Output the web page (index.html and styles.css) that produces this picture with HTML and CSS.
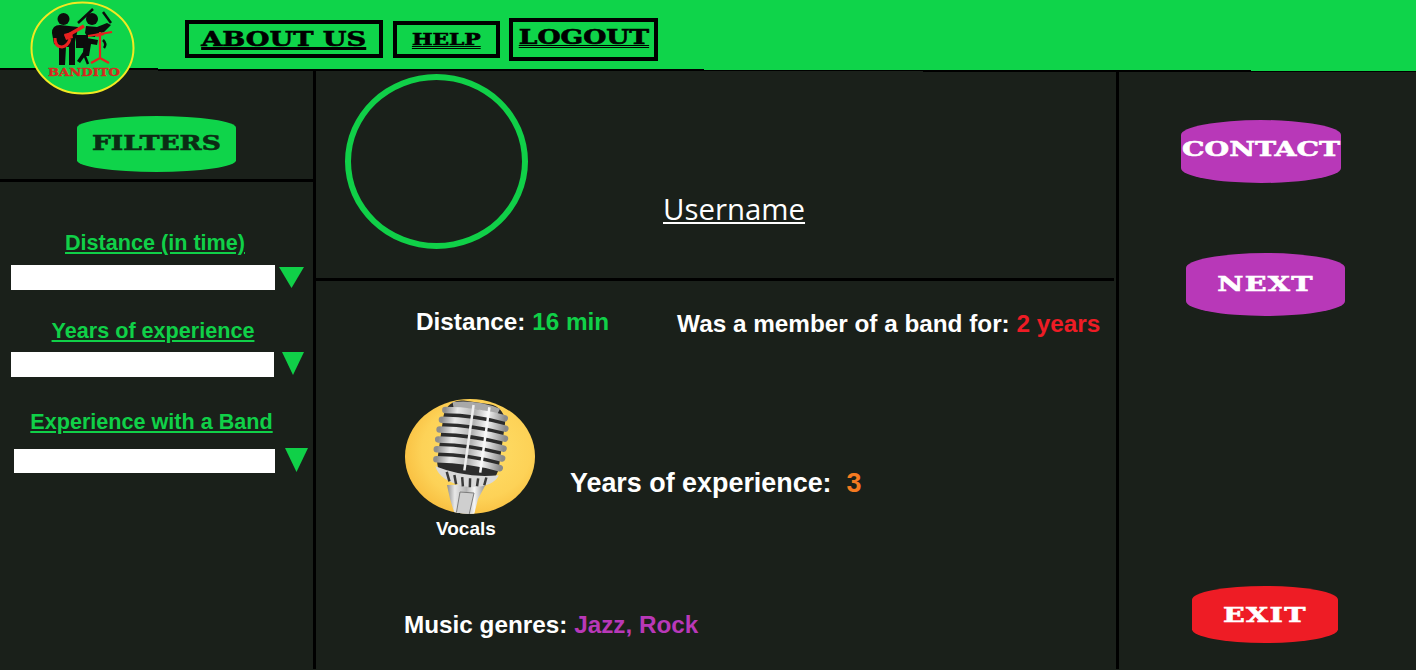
FILE: index.html
```html
<!DOCTYPE html>
<html lang="en">
<head>
    <meta charset="UTF-8">
    <meta name="viewport" content="width=device-width, initial-scale=1.0">
    <title>Bandito - Profile</title>
    <link rel="stylesheet" href="styles.css">
</head>
<body>
    <header class="topbar">
        <nav class="nav">
            <a class="nav-box nav-about" href="#"><span class="slab">ABOUT US</span></a>
            <a class="nav-box nav-help" href="#"><span class="slab">HELP</span></a>
            <a class="nav-box nav-logout" href="#"><span class="slab">LOGOUT</span></a>
        </nav>
        <div class="edge">
            <i class="edge-a"></i><i class="edge-b"></i><i class="edge-c"></i><i class="edge-d"></i><i class="edge-e"></i>
        </div>
    </header>

    <svg class="logo" viewBox="20 0 125 100" aria-label="Bandito logo">
        <ellipse cx="82.5" cy="48" rx="51" ry="45.5" fill="#0fd44a" stroke="#f2e922" stroke-width="2"/>
        <!-- guitarist -->
        <circle cx="63.5" cy="19" r="6" fill="#0c0c0c"/>
        <path d="M78 27 L60 25 Q52 25 52 33 L54 44 L59 46 L59 65 L65 65 L66 47 L69 47 L69 65 L75 65 L75 42 L77 33 Z" fill="#0c0c0c"/>
        <!-- drummer -->
        <circle cx="92" cy="19" r="6" fill="#0c0c0c"/>
        <path d="M78 23 L93 9" stroke="#0c0c0c" stroke-width="2.5" fill="none"/>
        <path d="M103 12 L111 23" stroke="#0c0c0c" stroke-width="2.5" fill="none"/>
        <path d="M85 33 L86 26 L97 27 L107 23 L111 25 L104 32 L96 34 L95 37 L87 36 Z" fill="#0c0c0c"/>
        <rect x="76" y="35" width="12" height="13" fill="#0c0c0c"/>
        <path d="M87 38 L98 40 L97 45 L91 44 L89 56 L85 56 L80 63 L77 61 L83 52 L84 42 Z" fill="#0c0c0c"/>
        <path d="M84 54 L88 64" stroke="#0c0c0c" stroke-width="2.5"/>
        <path d="M103 40 Q107 44 104 48" stroke="#0c0c0c" stroke-width="2.5" fill="none"/>
        <!-- guitar and cymbal stand -->
        <path d="M55 38 Q55 47 62 47 Q68 46 70 39" stroke="#e8201f" stroke-width="3" fill="none"/>
        <path d="M65 37 L84 26" stroke="#e8201f" stroke-width="3.5" fill="none"/>
        <path d="M64 34 L72 32 L73 38 L66 40 Z" fill="#e8201f"/>
        <path d="M88 36 L112 32 M100 32 L100 58 M100 58 L91 63 M100 58 L109 63 M96 36 L104 34" stroke="#e8201f" stroke-width="2.2" fill="none"/>
        <text class="logo-name" x="84" y="76" text-anchor="middle" textLength="72" lengthAdjust="spacingAndGlyphs">BANDITO</text>
    </svg>

    <main class="layout">
        <aside class="filters">
            <div class="filters-head">
                <button class="pill pill-filters"><span class="slab">FILTERS</span></button>
            </div>
            <div class="filter filter-distance">
                <label class="filter-label">Distance (in time)</label>
                <div class="filter-row">
                    <div class="filter-input"></div>
                    <svg class="arrow" viewBox="0 0 25 21" preserveAspectRatio="none"><path d="M0 0H25L12.5 21Z"/></svg>
                </div>
            </div>
            <div class="filter filter-years">
                <label class="filter-label">Years of experience</label>
                <div class="filter-row">
                    <div class="filter-input"></div>
                    <svg class="arrow" viewBox="0 0 25 21" preserveAspectRatio="none"><path d="M0 0H25L12.5 21Z"/></svg>
                </div>
            </div>
            <div class="filter filter-band">
                <label class="filter-label">Experience with a Band</label>
                <div class="filter-row">
                    <div class="filter-input"></div>
                    <svg class="arrow" viewBox="0 0 25 21" preserveAspectRatio="none"><path d="M0 0H25L12.5 21Z"/></svg>
                </div>
            </div>
        </aside>

        <section class="profile">
            <div class="profile-head">
                <div class="avatar"></div>
                <a class="username" href="#">Username</a>
            </div>
            <div class="profile-body">
                <div class="facts">
                    <p class="fact-distance">Distance: <span class="green">16 min</span></p>
                    <p class="fact-band">Was a member of a band for: <span class="red">2 years</span></p>
                </div>
                <div class="skill">
                    <figure class="instrument">
                        <svg class="mic" viewBox="0 0 130 115" aria-label="Microphone">
                            <defs>
                                <radialGradient id="sun" cx="55%" cy="45%" r="60%">
                                    <stop offset="0" stop-color="#ffe06a"/>
                                    <stop offset="0.7" stop-color="#fdd257"/>
                                    <stop offset="1" stop-color="#f8bd3e"/>
                                </radialGradient>
                                <linearGradient id="chrome" x1="0" x2="1" y1="0" y2="0">
                                    <stop offset="0" stop-color="#8d8d8d"/>
                                    <stop offset="0.2" stop-color="#e8e8e8"/>
                                    <stop offset="0.5" stop-color="#b4b4b4"/>
                                    <stop offset="0.7" stop-color="#f6f6f6"/>
                                    <stop offset="1" stop-color="#8a8a8a"/>
                                </linearGradient>
                                <clipPath id="disc"><ellipse cx="65" cy="57.5" rx="65" ry="57.5"/></clipPath>
                            </defs>
                            <ellipse cx="65" cy="57.5" rx="65" ry="57.5" fill="url(#sun)"/>
                            <g clip-path="url(#disc)">
                                <path d="M42 86 L81 85 L73 100 L69 116 L50 116 L45 100 Z" fill="url(#chrome)"/>
                                <path d="M55 93 L69 94 L64 116 L51 116 Z" fill="#cfcfcf" stroke="#7d7d7d"/>
                                <g transform="rotate(8 66 44)">
                                    <rect x="35" y="3" width="62" height="80" rx="18" fill="#2c2c2c"/>
                                    <path d="M42 6 Q66 0 90 6 L88 12 Q66 8 44 12 Z" fill="#a8a8a8"/>
                                    <g fill="none" stroke="url(#chrome)" stroke-width="6.5" stroke-linecap="round">
                                        <path d="M36 15 Q66 11 96 15"/>
                                        <path d="M34 25 Q66 21 98 25"/>
                                        <path d="M33 35 Q66 31 99 35"/>
                                        <path d="M33 45 Q66 41 99 45"/>
                                        <path d="M33 55 Q66 51 99 55"/>
                                        <path d="M34 65 Q66 61 98 65"/>
                                    </g>
                                    <path d="M34 72 Q66 80 98 72 Q94 86 66 88 Q40 86 34 72 Z" fill="#d9d9d9"/>
                                    <path d="M46 76 L50 85 M54 78 L57 87 M62 79 L64 88 M70 79 L71 88 M78 78 L78 86 M86 76 L85 84" stroke="#3a3a3a" stroke-width="2.5"/>
                                    <rect x="62" y="6" width="2.5" height="66" fill="#efefef"/>
                                    <rect x="78" y="6" width="2.5" height="66" fill="#f8f8f8"/>
                                </g>
                            </g>
                        </svg>
                        <figcaption class="instrument-name">Vocals</figcaption>
                    </figure>
                    <p class="fact-years">Years of experience:&nbsp; <span class="orange">3</span></p>
                </div>
                <p class="fact-genres">Music genres: <span class="purple">Jazz, Rock</span></p>
            </div>
        </section>

        <aside class="actions">
            <button class="pill pill-contact"><span class="slab">CONTACT</span></button>
            <button class="pill pill-next"><span class="slab">NEXT</span></button>
            <button class="pill pill-exit"><span class="slab">EXIT</span></button>
        </aside>
    </main>
</body>
</html>
```

FILE: styles.css
```css
html, body {
    margin: 0;
    padding: 0;
    height: 670px;
    overflow: hidden;
}
body {
    background: #1a201a;
    font-family: "Liberation Sans", Arial, sans-serif;
    color: #fff;
    position: relative;
}
p {
    margin: 0;
}
.green { color: #10d048; }
.red { color: #ee1c25; }
.orange { color: #f47a20; }
.purple { color: #b838b8; }

/* wide slab lettering used on every button */
.slab {
    display: inline-block;
    font-family: "DejaVu Serif", serif;
    font-weight: 700;
    font-size: 20px;
    line-height: 22px;
    text-decoration: underline;
    text-decoration-thickness: 1px;
    text-underline-offset: 3px;
    -webkit-text-stroke: 0.6px currentColor;
    transform: scaleX(1.36);
    white-space: nowrap;
}

.topbar {
    height: 72px;
    display: flex;
    flex-direction: column;
    background: #1a201a;
}
.nav {
    height: 68px;
    flex: none;
    background: #0fd44a;
    display: flex;
    align-items: flex-start;
    padding-left: 185px;
    box-sizing: border-box;
}
.nav-box {
    box-sizing: border-box;
    border: 4px solid #000;
    color: #000;
    display: flex;
    justify-content: center;
    align-items: center;
}
.nav-about { width: 198px; height: 38px; margin-top: 20px; }
.nav-help { width: 107px; height: 37px; margin: 21px 0 0 10px; }
.nav-help .slab { font-size: 16px; }
.nav-logout { width: 149px; height: 43px; margin: 18px 0 0 9px; padding-bottom: 3px; }
.nav-logout .slab { font-size: 19.5px; }

/* the header's lower edge steps down a pixel at a time */
.edge {
    display: flex;
    height: 4px;
}
.edge i {
    display: block;
    background: #0fd44a;
    box-sizing: content-box;
    border-bottom: 1px solid #000;
    align-self: flex-start;
}
.edge-a { width: 158px; height: 0; border-bottom-width: 2px !important; }
.edge-b { width: 546px; height: 1px; border-bottom-width: 2px !important; }
.edge-c { width: 219px; height: 2px; }
.edge-d { width: 328px; height: 2px; border-bottom-width: 2px !important; }
.edge-e { flex: 1; height: 3px; }

.logo {
    position: absolute;
    left: 20px;
    top: 0;
    width: 125px;
    height: 100px;
}
.logo-name {
    font-family: "DejaVu Serif", serif;
    font-weight: 700;
    font-size: 11px;
    fill: #d8281f;
    stroke: #d8281f;
    stroke-width: 0.4px;
}

.layout {
    display: flex;
    height: 598px;
    margin-top: -1px;
}

.filters {
    width: 316px;
    flex: none;
    box-sizing: border-box;
    border-right: 3px solid #000;
}
.filters-head {
    height: 111px;
    box-sizing: border-box;
    border-bottom: 3px solid #000;
    padding: 45px 0 0 77px;
}
.filter {
    display: flex;
    flex-direction: column;
}
.filter-label {
    color: #10d048;
    font-weight: 700;
    font-size: 21.6px;
    line-height: 24px;
    text-decoration: underline;
    text-align: center;
}
.filter-row {
    display: flex;
    align-items: flex-start;
}
.filter-input {
    background: #fff;
}
.arrow {
    display: block;
    fill: #10d048;
}
.filter-distance { margin-top: 49px; }
.filter-distance .filter-label { width: 310px; }
.filter-distance .filter-row { margin: 10px 0 0 11px; }
.filter-distance .filter-input { width: 264px; height: 25px; }
.filter-distance .arrow { width: 25px; height: 21px; margin: 2px 0 0 4px; }
.filter-years { margin-top: 29px; }
.filter-years .filter-label { width: 306px; }
.filter-years .filter-row { margin: 9px 0 0 11px; }
.filter-years .filter-input { width: 263px; height: 25px; }
.filter-years .arrow { width: 22px; height: 23px; margin: 0 0 0 8px; }
.filter-band { margin-top: 33px; }
.filter-band .filter-label { width: 303px; }
.filter-band .filter-row { margin: 15px 0 0 14px; }
.filter-band .filter-input { width: 261px; height: 24px; }
.filter-band .arrow { width: 23px; height: 24px; margin: -1px 0 0 10px; }

.profile {
    width: 803px;
    flex: none;
    box-sizing: border-box;
    border-right: 3px solid #000;
}
.profile-head {
    height: 210px;
    box-sizing: border-box;
    border-bottom: 3px solid #000;
    margin-right: 2px;
    display: flex;
    align-items: flex-start;
}
.avatar {
    width: 183px;
    height: 175px;
    box-sizing: border-box;
    border: 6px solid #10d048;
    border-radius: 50%;
    margin: 3px 0 0 29px;
}
.username {
    font-family: "Open Sans", sans-serif;
    font-size: 29.4px;
    line-height: 40px;
    color: #fff;
    margin: 118px 0 0 135px;
}

.profile-body {
    display: flex;
    flex-direction: column;
}
.facts {
    display: flex;
    font-weight: 700;
    align-items: flex-start;
    margin-top: 27px;
}
.fact-distance {
    font-size: 24.3px;
    line-height: 28px;
    margin-left: 100px;
}
.fact-band {
    font-size: 24.3px;
    line-height: 28px;
    margin: 2px 0 0 68px;
}
.skill {
    display: flex;
    align-items: flex-start;
    margin-top: 61px;
}
.instrument {
    margin: 0 0 0 89px;
    width: 130px;
}
.mic {
    display: block;
    width: 130px;
    height: 115px;
}
.instrument-name {
    font-size: 19px;
    font-weight: 700;
    line-height: 22px;
    margin: 4px 0 0 31px;
}
.fact-years {
    font-size: 26.9px;
    font-weight: 700;
    line-height: 30px;
    margin: 69px 0 0 35px;
}
.fact-genres {
    font-size: 24.3px;
    font-weight: 700;
    line-height: 28px;
    margin: 71px 0 0 88px;
}

.actions {
    flex: 1;
    display: flex;
    flex-direction: column;
    align-items: flex-start;
}
.pill {
    border: none;
    padding: 0;
    color: #fff;
    display: flex;
    justify-content: center;
    align-items: center;
    border-radius: 50% / 24%;
}
.pill .slab {
    text-decoration: none;
}
.pill-filters {
    width: 159px;
    height: 56px;
    background: #0fd44a;
    color: #0b2d14;
    border-radius: 50% / 21%;
}
.pill-filters .slab { font-size: 19.5px; }
.pill-contact {
    width: 160px;
    height: 63px;
    margin: 49px 0 0 62px;
    background: #b838b8;
    padding-bottom: 5px;
}
.pill-contact .slab { font-size: 20.8px; }
.pill-next {
    width: 159px;
    height: 63px;
    margin: 70px 0 0 67px;
    background: #b838b8;
    padding-bottom: 2px;
}
.pill-next .slab { font-size: 21px; letter-spacing: 1px; }
.pill-exit {
    width: 146px;
    height: 57px;
    margin: 270px 0 0 73px;
    background: #ee1c25;
}
.pill-exit .slab { font-size: 21px; letter-spacing: 1px; }
```
